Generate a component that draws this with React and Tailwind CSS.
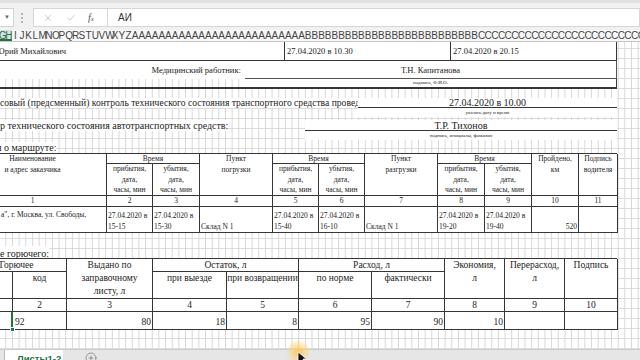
import { X, Check, CirclePlus } from "lucide-react";

const letters = [
  "I", "J", "K", "L", "M", "N", "O", "P", "Q", "R", "S", "T", "U", "V", "W", "X", "Y", "Z",
  ...Array(26).fill("A"),
  ...Array(26).fill("B"),
  ...Array(26).fill("C"),
];

function C({ className = "", children }) {
  return (
    <div className={`border-r border-b border-[#363636] overflow-hidden ${className}`}>
      {children}
    </div>
  );
}

function RouteTable() {
  const sub = (word, key) => (
    <C key={key} className="text-center">
      {word}
      <br />
      дата,
      <br />
      часы, мин
    </C>
  );
  const dt = (t, key) => (
    <C key={key} className="flex flex-col justify-end pl-[1px] whitespace-nowrap">
      <span>27.04.2020 в</span>
      <span>{t}</span>
    </C>
  );
  return (
    <div className="ml-[-42px] w-[659px] grid grid-cols-[148px_46px_47px_73px_46px_46px_73px_47px_47px_47px_39px] grid-rows-[10px_32px_11px_26px] border-t border-l border-[#363636] bg-white text-[7.5px] leading-[10.5px]">
      <C className="row-span-2 text-center">
        Наименование
        <br />и адрес заказчика
      </C>
      <C className="col-span-2 text-center">Время</C>
      <C className="row-span-2 text-center">
        Пункт
        <br />
        погрузки
      </C>
      <C className="col-span-2 text-center">Время</C>
      <C className="row-span-2 text-center">
        Пункт
        <br />
        разгрузки
      </C>
      <C className="col-span-2 text-center">Время</C>
      <C className="row-span-2 text-center">
        Пройдено,
        <br />
        км
      </C>
      <C className="row-span-2 text-center">
        Подпись
        <br />
        водителя
      </C>
      {sub("прибытия,", "a")}
      {sub("убытия,", "b")}
      {sub("прибытия,", "c")}
      {sub("убытия,", "d")}
      {sub("прибытия,", "e")}
      {sub("убытия,", "f")}
      {[1, 2, 3, 4, 5, 6, 7, 8, 9, 10, 11].map((n) => (
        <C key={n} className="text-center leading-[10px]">
          {n}
        </C>
      ))}
      <C className="pl-[42px] pt-[3px] whitespace-nowrap">а", г. Москва, ул. Свободы,</C>
      {dt("15-15", "g")}
      {dt("15-30", "h")}
      <C className="flex items-end pl-[1px]">Склад N 1</C>
      {dt("15-40", "i")}
      {dt("16-10", "j")}
      <C className="flex items-end pl-[1px]">Склад N 1</C>
      {dt("19-20", "k")}
      {dt("19-40", "l")}
      <C className="flex items-end justify-end pr-[1px]">520</C>
      <C />
    </div>
  );
}

function FuelTable() {
  return (
    <div className="ml-[-34px] w-[651px] grid grid-cols-[46px_54px_86px_74px_72px_73px_73px_60px_60px_53px] grid-rows-[13px_27px_13px_18px] border-t border-l border-[#363636] bg-white text-[9.5px] leading-[13px]">
      <C className="col-span-2 text-center">Горючее</C>
      <C className="row-span-2 text-center">
        Выдано по
        <br />
        заправочному
        <br />
        листу, л
      </C>
      <C className="col-span-2 text-center">Остаток, л</C>
      <C className="col-span-2 text-center">Расход, л</C>
      <C className="row-span-2 text-center">
        Экономия,
        <br />л
      </C>
      <C className="row-span-2 text-center">
        Перерасход,
        <br />л
      </C>
      <C className="row-span-2 text-center">Подпись</C>
      <C />
      <C className="text-center">код</C>
      <C className="text-center whitespace-nowrap">при выезде</C>
      <C className="text-center whitespace-nowrap">при возвращении</C>
      <C className="text-center whitespace-nowrap">по норме</C>
      <C className="text-center whitespace-nowrap">фактически</C>
      {[1, 2, 3, 4, 5, 6, 7, 8, 9, 10].map((n) => (
        <C key={n} className="text-center leading-[12px]">
          {n}
        </C>
      ))}
      <div className="relative border-b border-r-2 border-r-[#217346] border-b-[#363636]">
        <div className="absolute right-[-4px] bottom-[-3px] w-[5px] h-[5px] bg-[#217346] border border-white" />
      </div>
      <C className="flex items-end pl-[2px]">92</C>
      <C className="flex items-end justify-end pr-[1px]">80</C>
      <C className="flex items-end justify-end pr-[1px]">18</C>
      <C className="flex items-end justify-end pr-[1px]">8</C>
      <C className="flex items-end justify-end pr-[1px]">95</C>
      <C className="flex items-end justify-end pr-[1px]">90</C>
      <C className="flex items-end justify-end pr-[1px]">10</C>
      <C />
      <C />
    </div>
  );
}

export default function App() {
  return (
    <div className="w-[640px] h-[360px] overflow-hidden bg-white relative text-[#1c1c1c]">
      {/* formula bar */}
      <div className="h-[30px] bg-[#f1f1f1] border-t-[3px] border-[#e0e0e0] flex items-start pt-[5px] font-['Liberation_Sans']">
        <div className="w-[14px] h-[19px] bg-white border border-l-0 border-[#d2d2d2] flex items-center justify-end pr-[3px] text-[6px] text-[#666]">
          ▼
        </div>
        <div className="ml-[7px] mt-[5px] flex flex-col gap-[2px]">
          <span className="w-[2px] h-[2px] bg-[#b5b5b5]" />
          <span className="w-[2px] h-[2px] bg-[#b5b5b5]" />
          <span className="w-[2px] h-[2px] bg-[#b5b5b5]" />
        </div>
        <div className="ml-[10px] w-[74px] h-[19px] bg-white border border-r-0 border-[#d6d6d6] flex items-center">
          <X size={10} strokeWidth={1.4} color="#a6a6a6" className="ml-[9px]" />
          <Check size={10} strokeWidth={1.4} color="#a6a6a6" className="ml-[13px]" />
          <span className="ml-[12px] font-['Liberation_Serif'] italic text-[10px] text-[#555]">
            f<span className="text-[7px]">x</span>
          </span>
        </div>
        <div className="flex-1 h-[19px] bg-white border border-[#d6d6d6] flex items-center pl-[10px] text-[10px] text-[#333]">
          АИ
        </div>
      </div>

      {/* column headers */}
      <div className="h-[12px] bg-[#f8f8f8] border-b border-[#c6c6c6] flex overflow-hidden font-['Liberation_Sans'] text-[10px] leading-[11px] text-[#444]">
        <div className="ml-[-1.33px] flex shrink-0">
          <div className="flex bg-[#dedede] border-b-2 border-[#217346] text-[#217346]">
            <span className="w-[6.667px] text-center">G</span>
            <span className="w-[6.667px] text-center">H</span>
          </div>
          {letters.map((l, i) => (
            <span key={i} className="w-[6.667px] shrink-0 text-center">
              {l}
            </span>
          ))}
        </div>
      </div>

      {/* sheet */}
      <div className="h-[307px] flex flex-col overflow-hidden bg-[linear-gradient(90deg,#d6d6d6_1px,transparent_1px),linear-gradient(#dcdcdc_1px,transparent_1px)] bg-[size:6.667px_10px] bg-[position:5.33px_6px] font-['Liberation_Serif']">
        <div className="h-[19px] w-[617px] flex shrink-0 border-b border-[#363636] bg-white text-[8.5px]">
          <div className="w-[285px] flex items-center overflow-hidden border-r border-[#363636]">
            <span className="ml-[-4px] whitespace-nowrap">Юрий Михайлович</span>
          </div>
          <div className="w-[166px] flex items-center pl-[2px] border-r border-[#363636]">27.04.2020 в 10.30</div>
          <div className="w-[166px] flex items-center pl-[2px] border-r border-[#363636]">27.04.2020 в 20.15</div>
        </div>
        <div className="h-[18px] w-[617px] flex shrink-0 bg-white">
          <div className="w-[245px] flex items-center justify-end pr-[4px] text-[8.6px]">Медицинский работник:</div>
          <div className="w-[372px] flex items-center justify-center border-b border-r border-[#555] text-[8.5px] pt-[1px]">
            Т.Н. Капитанова
          </div>
        </div>
        <div className="h-[10px] w-[617px] flex shrink-0 border-b-2 border-[#363636]">
          <div className="w-[245px]" />
          <div className="w-[372px] bg-white border-r border-[#363636] flex items-center justify-center text-[5px]">
            подпись, Ф.И.О.
          </div>
        </div>
        <div className="h-[9px] shrink-0" />
        <div className="h-[10px] w-[617px] flex shrink-0 text-[10px] leading-[10px]">
          <div className="w-[358px] bg-white overflow-hidden whitespace-nowrap text-[9.6px]">
            совый (предсменный) контроль технического состояния транспортного средства проведен
          </div>
          <div className="w-[259px] bg-white border-b border-[#363636] text-center">27.04.2020 в 10.00</div>
        </div>
        <div className="h-[9px] w-[617px] flex shrink-0">
          <div className="w-[358px]" />
          <div className="w-[259px] bg-white flex items-center justify-center text-[5px]">указать дату и время</div>
        </div>
        <div className="h-[3px] shrink-0" />
        <div className="h-[11px] w-[617px] flex shrink-0 text-[10px] leading-[11px]">
          <div className="w-[305px]">
            <span className="bg-white whitespace-nowrap">р технического состояния автотранспортных средств:</span>
          </div>
          <div className="w-[312px] bg-white border-b border-[#363636] text-center">Т.Р. Тихонов</div>
        </div>
        <div className="h-[9px] w-[617px] flex shrink-0">
          <div className="w-[305px]" />
          <div className="w-[312px] bg-white flex items-center justify-center text-[5px]">
            подпись, инициалы, фамилия
          </div>
        </div>
        <div className="h-[2px] shrink-0" />
        <div className="h-[11px] shrink-0 flex items-center overflow-hidden text-[10px]">
          <span className="ml-[-3px] bg-white whitespace-nowrap">я о маршруте:</span>
        </div>
        <RouteTable />
        <div className="h-[15px] shrink-0" />
        <div className="h-[10px] shrink-0 flex items-center text-[10px]">
          <span className="bg-white whitespace-nowrap">е горючего:</span>
        </div>
        <FuelTable />
      </div>

      {/* sheet tabs */}
      <div className="h-[20px] bg-[#e6e6e6] border-t border-[#cdcdcd] flex font-['Liberation_Sans']">
        <div className="w-[5px] border-r border-[#bcbcbc]" />
        <div className="w-[58px] bg-white pl-[12px] pt-[2px] text-[9.5px] font-bold text-[#217346] underline">
          Листы1-2
        </div>
        <div className="ml-[22px] mt-[2px]">
          <CirclePlus size={12} color="#7a7a7a" strokeWidth={1.5} />
        </div>
      </div>

      {/* pointer highlight */}
      <div className="absolute left-[286px] top-[340px] w-[24px] h-[24px] rounded-full bg-[radial-gradient(circle,rgba(255,196,80,0.85)_0%,rgba(255,214,120,0.4)_55%,rgba(255,230,150,0)_72%)]" />
      <svg className="absolute left-[297px] top-[351px]" width="10" height="14" viewBox="0 0 10 14">
        <path d="M1 1 L1 12 L4 9 L6 13 L8 12 L6 8 L9.5 8 Z" fill="#111" stroke="#fff" strokeWidth="0.8" />
      </svg>
    </div>
  );
}
